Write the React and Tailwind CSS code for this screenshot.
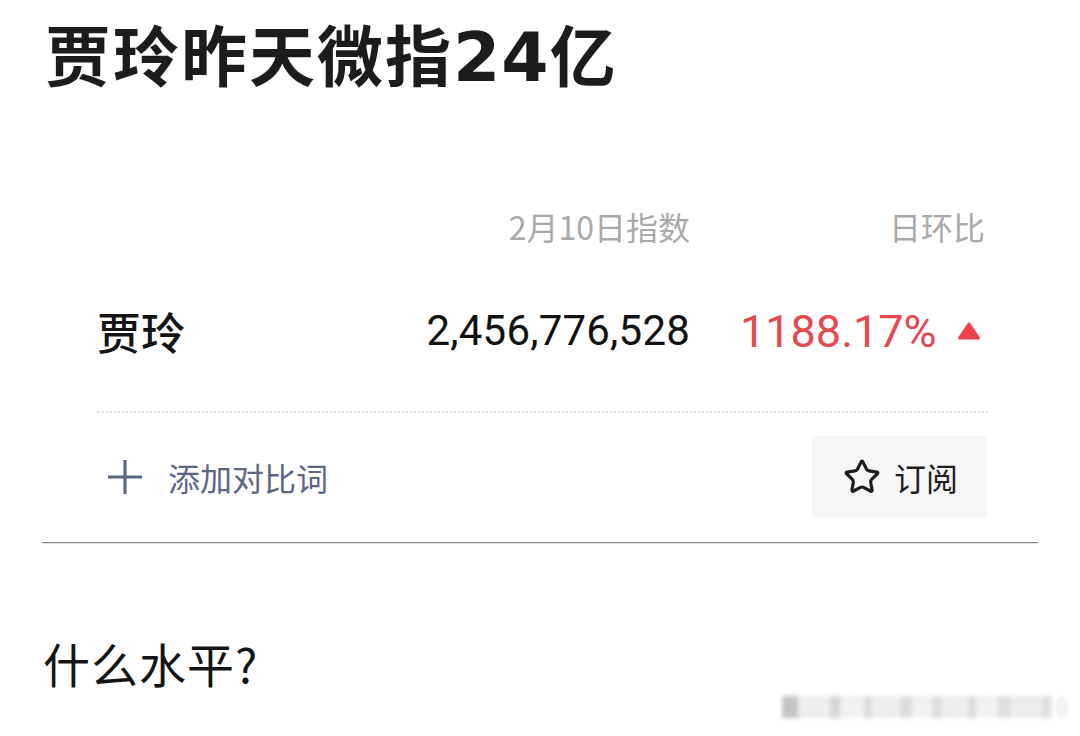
import { Star } from 'lucide-react'

const cjk = "font-['Noto_Sans_CJK_SC',sans-serif]"
const num = "font-['Roboto','Noto_Sans_CJK_SC',sans-serif]"

const blurBars = [
  { w: 16, o: 0.5 },
  { w: 32, o: 0.15 },
  { w: 10, o: 0.35 },
  { w: 24, o: 0.12 },
  { w: 8, o: 0.3 },
  { w: 28, o: 0.14 },
  { w: 12, o: 0.3 },
  { w: 20, o: 0.12 },
  { w: 10, o: 0.28 },
  { w: 26, o: 0.14 },
  { w: 8, o: 0.3 },
  { w: 22, o: 0.12 },
  { w: 12, o: 0.28 },
  { w: 32, o: 0.16 },
  { w: 10, o: 0.26 },
]

function Watermark() {
  return (
    <div className="flex justify-end pr-[14px] mt-[8px]">
      <div className="flex items-center h-[26px] blur-[2px]">
        {blurBars.map((b, i) => (
          <div key={i} className="h-[22px] bg-[#8a8a8a]" style={{ width: b.w, opacity: b.o }} />
        ))}
        <div className="ml-[6px] w-[8px] h-[18px] border border-[#bbb] rounded-sm" />
      </div>
    </div>
  )
}

function IndexCard() {
  return (
    <div className="ml-[97px] w-[891px]">
      <div className="flex items-center h-[40px] mt-[116px] text-[32px] text-[#a9a9a9]">
        <div className={`w-[593px] text-right ${cjk}`}>2月10日指数</div>
        <div className={`w-[298px] text-right pr-[3px] ${cjk}`}>日环比</div>
      </div>

      <div className="flex items-center h-[60px] mt-[55px]">
        <div className="w-[593px] flex items-center justify-between">
          <span className={`text-[44px] leading-none font-medium text-[#141414] ${cjk}`}>贾玲</span>
          <span className={`text-[42px] leading-none text-[#111] tracking-[0.2px] ${num}`}>2,456,776,528</span>
        </div>
        <div className="w-[298px] flex items-center justify-between pl-[50px] pr-[7px]">
          <span className={`text-[45px] leading-none text-[#e5494f] ${num}`}>1188.17%</span>
          <svg width="24" height="20" viewBox="0 0 24 20">
            <path d="M12 3 L21.5 17 L2.5 17 Z" fill="#f0424a" stroke="#f0424a" strokeWidth="3" strokeLinejoin="round" />
          </svg>
        </div>
      </div>

      <div className="mt-[50px] border-t-2 border-dotted border-[#dcdcdc]" />

      <div className="flex items-center justify-between mt-[23px]">
        <div className="flex items-center pl-[9px] gap-[24px] text-[#5b6584]">
          <svg width="38" height="38" viewBox="0 0 38 38">
            <path d="M19 2 V36 M2 19 H36" stroke="#5b6584" strokeWidth="3.2" />
          </svg>
          <span className={`text-[32px] leading-none ${cjk}`}>添加对比词</span>
        </div>
        <div className="w-[175px] h-[82px] mr-[1px] rounded-[3px] bg-[#f6f6f6] flex items-center pl-[31px] gap-[13px]">
          <Star size={38} strokeWidth={2} color="#1e1e1e" strokeLinejoin="miter" />
          <span className={`text-[32px] leading-none text-[#1e1e1e] ${cjk}`}>订阅</span>
        </div>
      </div>
    </div>
  )
}

export default function App() {
  return (
    <div className="w-[1080px] h-[736px] bg-white overflow-hidden">
      <h1 className={`pl-[45px] pt-[19px] h-[90px] text-[66px] leading-[66px] font-bold text-[#1c1c1c] tracking-[2px] ${cjk}`}>
        贾玲昨天微指
        <span className="font-['DejaVu_Sans',sans-serif] text-[68px] tracking-[1px]">24</span>
        亿
      </h1>

      <IndexCard />

      <div className="ml-[42px] w-[996px] mt-[24px] h-[2px] border-t border-[#8a8a8a] bg-[#e4e4e4]" />

      <p className={`pl-[43px] mt-[95px] text-[47px] leading-[47px] text-[#141414] tracking-[1px] ${cjk}`}>什么水平?</p>

      <Watermark />
    </div>
  )
}
